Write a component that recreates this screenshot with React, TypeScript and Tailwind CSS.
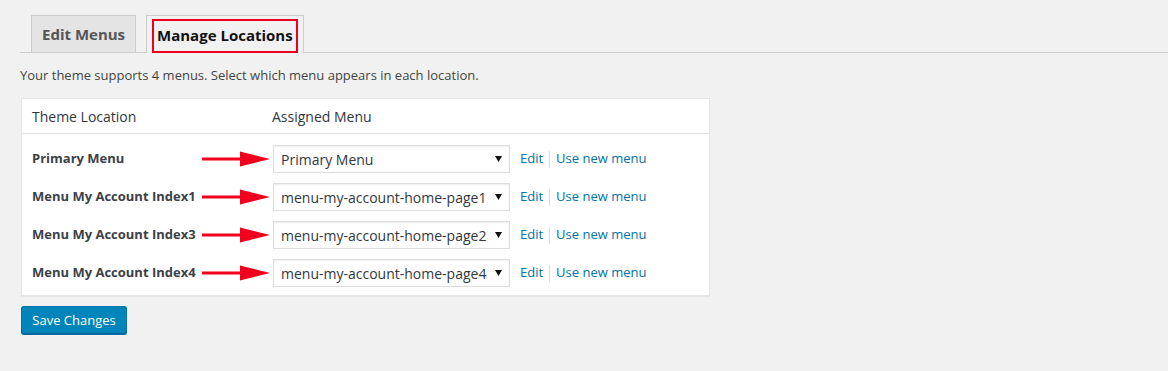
import React from "react";

const rows = [
  { label: "Primary Menu", value: "Primary Menu" },
  { label: "Menu My Account Index1", value: "menu-my-account-home-page1" },
  { label: "Menu My Account Index3", value: "menu-my-account-home-page2" },
  { label: "Menu My Account Index4", value: "menu-my-account-home-page4" },
];

function RedArrow() {
  return (
    <svg
      className="absolute left-[180px] top-[11px]"
      width="70"
      height="16"
      viewBox="0 0 70 16"
    >
      <rect x="0" y="6.5" width="40" height="3" fill="#f0001e" />
      <polygon points="38,0.5 68,8 38,15.5" fill="#f0001e" />
    </svg>
  );
}

export default function App() {
  return (
    <div
      className="w-full h-[371px] bg-[#f1f1f1] pt-[15px] pl-[20px] text-[#444]"
      style={{ fontFamily: '"Open Sans", "Noto Sans", sans-serif' }}
    >
      {/* Tabs */}
      <div className="flex items-start pl-[11px] gap-[10px] border-b border-[#ccc]">
        <div className="h-[37px] px-[10px] pt-[6px] bg-[#e4e4e4] border border-b-0 border-[#ccc] text-[15px] leading-[24px] font-bold text-[#555]">
          Edit Menus
        </div>
        <div className="relative z-10 h-[38px] -mb-px px-[5px] pt-[3px] bg-[#f1f1f1] border border-b-0 border-[#ccc]">
          <div className="h-[34px] border-2 border-[#ea0020] px-[3px] pt-[2px] text-[15px] leading-[24px] font-bold text-[#111]">
            Manage Locations
          </div>
        </div>
      </div>

      <p className="mt-[12px] text-[13px] leading-[20px] text-[#444]">
        Your theme supports 4 menus. Select which menu appears in each location.
      </p>

      {/* Table */}
      <div className="mt-[13px] ml-px w-[689px] bg-white border border-[#e5e5e5] shadow-[0_1px_1px_rgba(0,0,0,0.04)]">
        <div className="flex items-center h-[35px] border-b border-[#e1e1e1] text-[14px] text-[#32373c]">
          <div className="w-[250px] pl-[10px]">Theme Location</div>
          <div>Assigned Menu</div>
        </div>
        <div className="pt-[6px] pb-[3px]">
          {rows.map((r) => (
            <div key={r.label} className="relative flex items-center h-[38px]">
              <div className="w-[250px] pl-[10px] text-[13px] font-bold text-[#3c4146]">
                {r.label}
              </div>
              <RedArrow />
              <div className="ml-px w-[237px] h-[28px] flex items-center justify-between pl-[7px] pr-[7px] border border-[#ddd] shadow-[inset_0_1px_2px_rgba(0,0,0,0.07)] bg-white text-[14px] text-[#32373c]">
                <span>{r.value}</span>
                <svg width="7" height="6" viewBox="0 0 7 6">
                  <polygon points="0,0 7,0 3.5,6" fill="#111" />
                </svg>
              </div>
              <span className="ml-[10px] text-[13px] text-[#0073aa]">Edit</span>
              <span className="mx-[6px] w-px h-[17px] bg-[#ddd]" />
              <span className="text-[13px] text-[#0073aa]">Use new menu</span>
            </div>
          ))}
        </div>
      </div>

      <button className="mt-[10px] ml-px h-[28px] w-[106px] rounded-[3px] bg-[#0085ba] border border-[#0073aa] border-b-[#006799] shadow-[0_1px_0_#006799] text-white text-[13px] leading-[26px]">
        Save Changes
      </button>
    </div>
  );
}
